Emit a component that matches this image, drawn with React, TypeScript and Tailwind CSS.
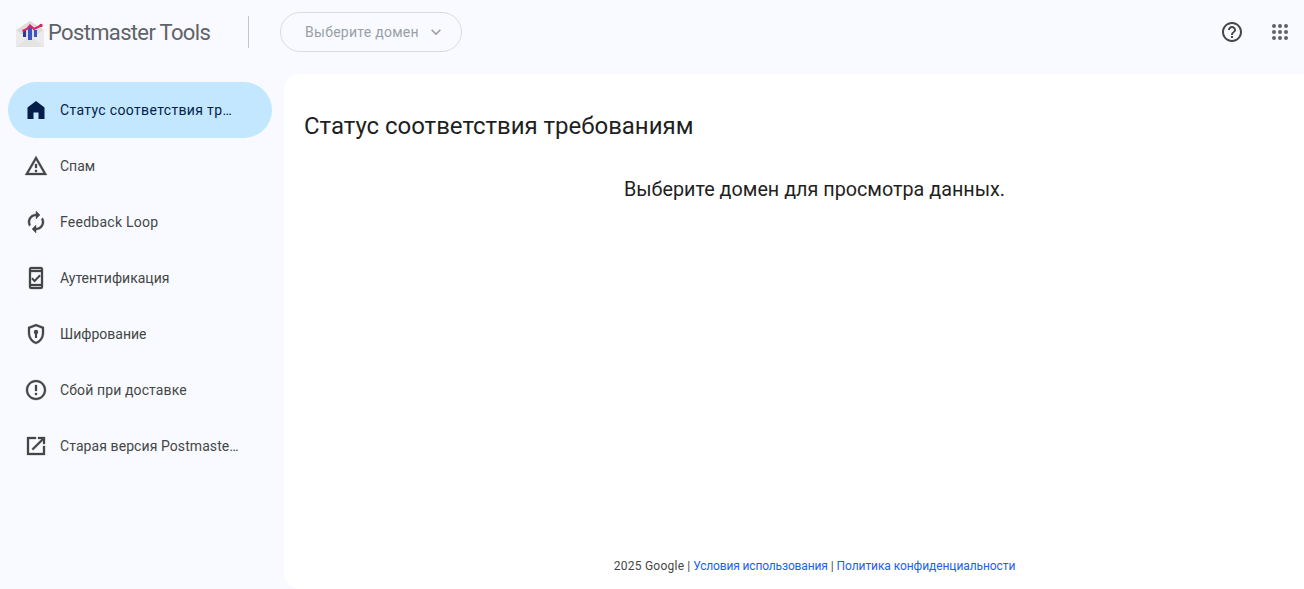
import React from "react";

const font = { fontFamily: '"Roboto", "Noto Sans", sans-serif' };

function Ico({ children, dark = false }: { children: React.ReactNode; dark?: boolean }) {
  return (
    <svg viewBox="0 0 24 24" className={dark ? "w-6 h-6 shrink-0 fill-[#041e49]" : "w-6 h-6 shrink-0 fill-[#444746]"}>
      {children}
    </svg>
  );
}

const items: { label: string; icon: React.ReactNode; active?: boolean; track: string }[] = [
  {
    label: "Статус соответствия требованиям",
    active: true,
    track: "tracking-[0.35px]",
    icon: (
      <Ico dark>
        <path d="M3.500 21V9.500L12 3l8.500 6.500V21H14.500v-6.500h-5V21z" />
      </Ico>
    ),
  },
  {
    label: "Спам",
    track: "tracking-normal",
    icon: (
      <Ico>
        <path d="M12 5.990L19.530 19H4.470L12 5.990M12 2L1 21h22L12 2zm1 14h-2v2h2v-2zm0-6h-2v4h2v-4z" stroke="#444746" strokeWidth="0.3" />
      </Ico>
    ),
  },
  {
    label: "Feedback Loop",
    track: "tracking-[0.25px]",
    icon: (
      <Ico>
        <path
          d="M12 6v3l4-4-4-4v3c-4.420 0-8 3.580-8 8 0 1.570.46 3.030 1.240 4.260L6.700 14.800c-.45-.83-.7-1.790-.7-2.800 0-3.310 2.690-6 6-6zm6.760 1.740L17.300 9.200c.44.84.7 1.790.7 2.800 0 3.310-2.690 6-6 6v-3l-4 4 4 4v-3c4.420 0 8-3.580 8-8 0-1.570-.46-3.030-1.240-4.260z"
          stroke="#444746"
          strokeWidth="0.4"
        />
      </Ico>
    ),
  },
  {
    label: "Аутентификация",
    track: "tracking-normal",
    icon: (
      <Ico>
        <path
          fillRule="evenodd"
          d="M7 1h10a2 2 0 0 1 2 2v18a2 2 0 0 1-2 2H7a2 2 0 0 1-2-2V3a2 2 0 0 1 2-2zm0 2v1h10V3H7zm0 3v12h10V6H7zm0 14v1h10v-1H7z"
          stroke="#444746"
          strokeWidth="0.3"
        />
        <path d="M10.600 16.400 7.200 13l1.500-1.500 1.900 1.900 4.800-4.800L16.900 10z" />
      </Ico>
    ),
  },
  {
    label: "Шифрование",
    track: "tracking-normal",
    icon: (
      <Ico>
        <path d="M12 2 4 5v6.090c0 5.050 3.410 9.760 8 10.910 4.590-1.150 8-5.860 8-10.910V5l-8-3zm6 9.090c0 4-2.550 7.700-6 8.830-3.450-1.130-6-4.820-6-8.830v-4.700l6-2.250 6 2.250v4.700z" stroke="#444746" strokeWidth="0.3" />
        <circle cx="12" cy="10" r="2.200" />
        <rect x="10.900" y="10" width="2.200" height="6" />
      </Ico>
    ),
  },
  {
    label: "Сбой при доставке",
    track: "tracking-[0.12px]",
    icon: (
      <Ico>
        <path d="M11 15h2v2h-2zm0-8h2v6h-2zm.99-5C6.470 2 2 6.480 2 12s4.470 10 9.990 10C17.520 22 22 17.520 22 12S17.520 2 11.990 2zM12 20c-4.420 0-8-3.580-8-8s3.580-8 8-8 8 3.580 8 8-3.580 8-8 8z" stroke="#444746" strokeWidth="0.3" />
      </Ico>
    ),
  },
  {
    label: "Старая версия Postmaster Tools",
    track: "tracking-[0.08px]",
    icon: (
      <Ico>
        <path d="M19 19H5V5h7V3H3v18h18v-9h-2v7zM14 3v2h3.590l-9.830 9.830 1.410 1.410L19 6.410V10h2V3h-7z" stroke="#444746" strokeWidth="0.3" />
      </Ico>
    ),
  },
];

function Logo() {
  return (
    <svg viewBox="0 0 28 26" className="w-7 h-[26px] shrink-0 mt-1">
      <path d="M0 9 14 0l14 9v17H0z" fill="#dcdcdc" />
      <path d="M0 26V9l14 9 14-9v17z" fill="#ebebeb" />
      <path d="M0 26 14 15l14 11z" fill="#e4e4e4" />
      <rect x="7" y="9" width="3" height="7" fill="#2c3e8f" />
      <rect x="12" y="6" width="4" height="13" fill="#3b55c4" />
      <rect x="18" y="9" width="3" height="7" fill="#3b55c4" />
      <path d="M6.500 10 11 8l3-3.500L18 8l7-3.500" fill="none" stroke="#dc2460" strokeWidth="2" />
      <circle cx="25" cy="4.500" r="1.700" fill="#dc2460" />
    </svg>
  );
}

export default function App() {
  return (
    <div style={font} className="h-[589px] w-[1304px] overflow-hidden bg-[#f8faff] flex flex-col">
      <header className="h-[74px] shrink-0 flex items-center pl-4 pr-3 pb-[10px]">
        <div className="flex items-center">
          <Logo />
          <span className="ml-1 mt-[2px] text-[22px] leading-7 tracking-[-0.66px] text-[#5f6368] w-[162px] whitespace-nowrap">Postmaster Tools</span>
        </div>
        <div className="w-px h-8 bg-[#c4c7c5] ml-[38px]" />
        <div className="ml-[31px] w-[182px] h-10 rounded-full border border-[#dadce0] flex items-center pl-6 pr-[15px] justify-between">
          <span className="text-sm text-[#9aa0a6] tracking-[0.27px] whitespace-nowrap">Выберите домен</span>
          <svg viewBox="0 0 24 24" className="w-5 h-5 fill-[#9aa0a6]">
            <path d="M7.410 8.590 12 13.170l4.590-4.580L18 10l-6 6-6-6z" />
          </svg>
        </div>
        <div className="ml-auto flex items-center gap-6">
          <svg viewBox="0 0 24 24" className="w-6 h-6 fill-[#444746]">
            <path d="M11 18h2v-2h-2v2zm1-16C6.480 2 2 6.480 2 12s4.480 10 10 10 10-4.480 10-10S17.520 2 12 2zm0 18c-4.410 0-8-3.590-8-8s3.590-8 8-8 8 3.590 8 8-3.590 8-8 8zm0-14c-2.210 0-4 1.790-4 4h2c0-1.100.9-2 2-2s2 .9 2 2c0 2-3 1.750-3 5h2c0-2.250 3-2.500 3-5 0-2.210-1.790-4-4-4z" />
          </svg>
          <svg viewBox="0 0 24 24" className="w-6 h-6 fill-[#5f6368]">
            {[6, 12, 18].map((y) =>
              [6, 12, 18].map((x) => <circle key={x + "-" + y} cx={x} cy={y} r="2" />)
            )}
          </svg>
        </div>
      </header>
      <div className="flex flex-1 min-h-0">
        <nav className="w-[284px] shrink-0 pl-2 pr-3 pt-2 flex flex-col">
          {items.map((it) => (
            <div
              key={it.label}
              className={
                it.active
                  ? "h-14 shrink-0 rounded-full flex items-center pl-4 pr-9 gap-3 bg-[#c2e7ff] text-[#041e49]"
                  : "h-14 shrink-0 rounded-full flex items-center pl-4 pr-8 gap-3 text-[#444746]"
              }
            >
              {it.icon}
              <span className={"text-sm truncate " + it.track}>{it.label}</span>
            </div>
          ))}
        </nav>
        <main className="flex-1 bg-white rounded-tl-2xl rounded-bl-2xl flex flex-col pl-5 pt-[34px] pb-[15px]">
          <h1 className="text-2xl leading-9 font-normal text-[#1f1f1f] tracking-[-0.03px] whitespace-nowrap">Статус соответствия требованиям</h1>
          <p className="mt-[32px] pl-[21px] text-[19.75px] leading-7 text-[#1f1f1f] text-center">Выберите домен для просмотра данных.</p>
          <footer className="mt-auto pl-[21px] text-center text-xs leading-4 text-[#444746]">
            <span className="tracking-[0.25px]">2025 Google</span> | <a className="text-[#1b5ff0] tracking-[-0.15px]">Условия использования</a> | <a className="text-[#1b5ff0] tracking-[-0.08px]">Политика конфиденциальности</a>
          </footer>
        </main>
      </div>
    </div>
  );
}
